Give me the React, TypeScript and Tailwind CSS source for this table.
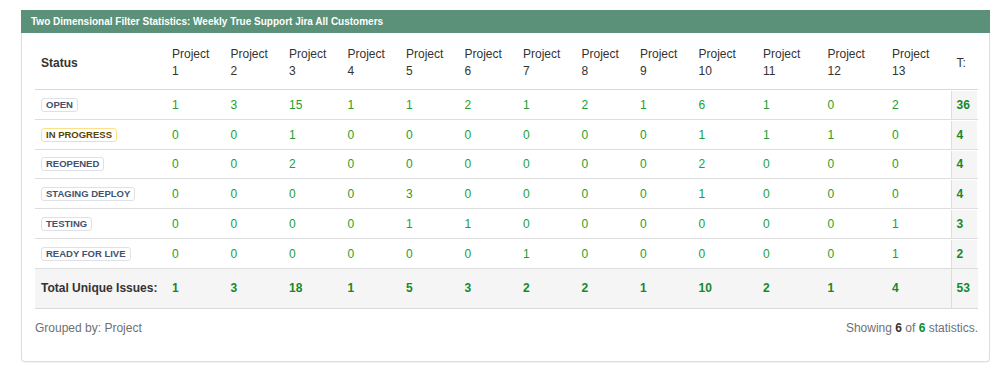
import React from 'react';

interface StatusRow {
  status: string;
  tone: 'default' | 'progress';
  counts: number[];
  total: number;
}

const projects = Array.from({ length: 13 }, (_, i) => i + 1);

const rows: StatusRow[] = [
  { status: 'Open', tone: 'default', counts: [1, 3, 15, 1, 1, 2, 1, 2, 1, 6, 1, 0, 2], total: 36 },
  { status: 'In Progress', tone: 'progress', counts: [0, 0, 1, 0, 0, 0, 0, 0, 0, 1, 1, 1, 0], total: 4 },
  { status: 'Reopened', tone: 'default', counts: [0, 0, 2, 0, 0, 0, 0, 0, 0, 2, 0, 0, 0], total: 4 },
  { status: 'Staging Deploy', tone: 'default', counts: [0, 0, 0, 0, 3, 0, 0, 0, 0, 1, 0, 0, 0], total: 4 },
  { status: 'Testing', tone: 'default', counts: [0, 0, 0, 0, 1, 1, 0, 0, 0, 0, 0, 0, 1], total: 3 },
  { status: 'Ready for Live', tone: 'default', counts: [0, 0, 0, 0, 0, 0, 1, 0, 0, 0, 0, 0, 1], total: 2 },
];

const totals = [1, 3, 18, 1, 5, 3, 2, 2, 1, 10, 2, 1, 4];

const gridCols = 'grid grid-cols-[131px_repeat(9,58.5px)_repeat(4,64.5px)_26.5px]';

const Lozenge: React.FC<{ label: string; tone: StatusRow['tone'] }> = ({ label, tone }) => (
  <span
    className={
      tone === 'progress'
        ? 'inline-block rounded-[3px] border border-[#ffe08a] bg-white px-[4px] text-[9.5px] font-bold uppercase leading-[12px] text-[#594300]'
        : 'inline-block rounded-[3px] border border-[#dfe1e6] bg-white px-[4px] text-[9.5px] font-bold uppercase leading-[12px] text-[#42526e]'
    }
  >
    {label}
  </span>
);

export default function App() {
  return (
    <div className="min-h-[367px] bg-white pl-[21px] pt-[10px] font-['Liberation_Sans',Arial,sans-serif] text-[12px] text-[#333]">
      <div className="w-[969px] rounded-b-[4px] border border-t-0 border-[#dddddd] shadow-[0_1px_1px_rgba(0,0,0,0.05)]">
        <div className="-mx-px flex h-[23px] items-center bg-[#5a9178] pl-[10px] text-[10px] font-bold text-white">
          Two Dimensional Filter Statistics: Weekly True Support Jira All Customers
        </div>

        <div className="pl-[13px] pr-[11px] pb-[24px]">
          {/* header */}
          <div className={`${gridCols} h-[57px] items-center border-b border-[#d9d9d9] pt-[3px]`}>
            <div className="pl-[6px] font-bold">Status</div>
            {projects.map((p) => (
              <div key={p} className="pl-[6px] leading-[17px]">
                Project
                <br />
                {p}
              </div>
            ))}
            <div className="pl-[6px]">T:</div>
          </div>

          {/* rows */}
          {rows.map((row) => (
            <div key={row.status} className={`${gridCols} h-[29.75px] items-stretch border-b border-[#dddddd] pt-px`}>
              <div className="flex items-center pl-[6px]">
                <Lozenge label={row.status} tone={row.tone} />
              </div>
              {row.counts.map((c, i) => (
                <div key={i} className="flex items-center pl-[6px] text-[#22a02f]">
                  {c}
                </div>
              ))}
              <div className="flex items-center border-l border-[#dddddd] bg-[#f5f5f5] pl-[5px] font-bold text-[#14892c]">
                {row.total}
              </div>
            </div>
          ))}

          {/* totals */}
          <div className={`${gridCols} h-[40.5px] items-stretch border-b border-[#d9d9d9] bg-[#f5f5f5] font-bold`}>
            <div className="flex items-center pl-[6px] text-[#333]">Total Unique Issues:</div>
            {totals.map((t, i) => (
              <div key={i} className="flex items-center pl-[6px] text-[#14892c]">
                {t}
              </div>
            ))}
            <div className="flex items-center border-l border-[#dddddd] pl-[5px] text-[#14892c]">53</div>
          </div>

          <div className="mt-[11px] flex items-center justify-between leading-[17px] text-[#707070]">
            <span>Grouped by: Project</span>
            <span>
              Showing <b className="text-[#333]">6</b> of <b className="text-[#14892c]">6</b> statistics.
            </span>
          </div>
        </div>
      </div>
    </div>
  );
}
